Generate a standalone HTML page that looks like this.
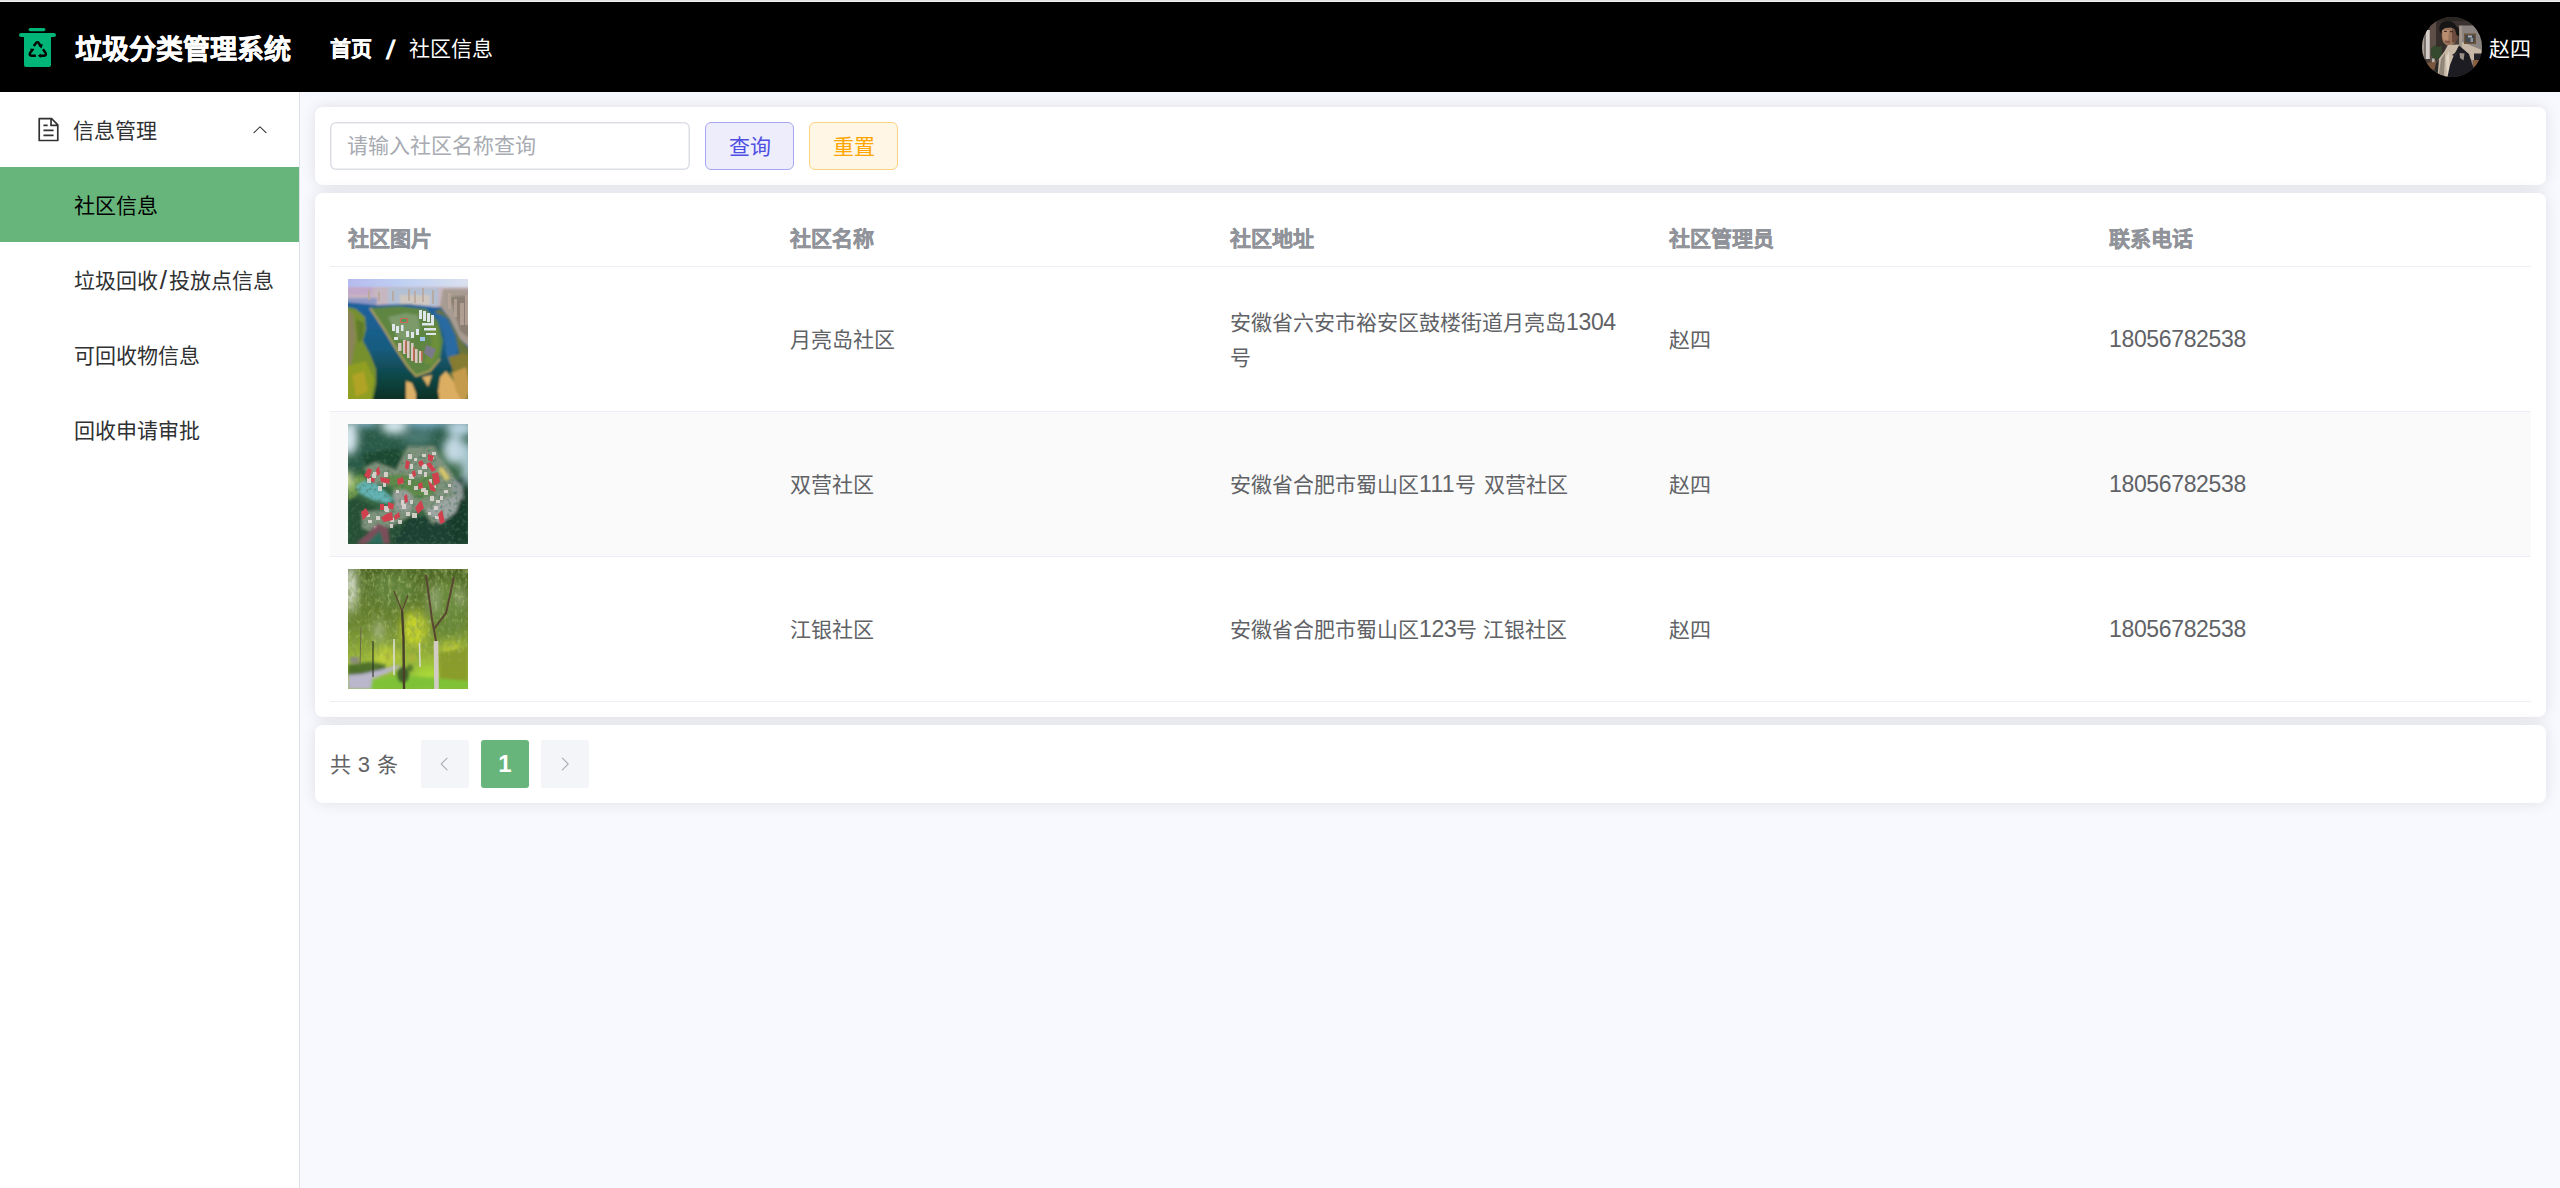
<!DOCTYPE html>
<html lang="zh-CN">
<head>
<meta charset="utf-8">
<title>垃圾分类管理系统</title>
<style>
*{box-sizing:border-box;margin:0;padding:0}
html,body{width:2560px;height:1188px;overflow:hidden;background:#f8f8ff;font-family:"Liberation Sans",sans-serif;}
body{position:relative}
.abs{position:absolute}
#strip{left:0;top:0;width:2560px;height:2px;background:linear-gradient(#e1e3e0 0,#e1e3e0 50%,#eff1ee 50%,#eff1ee 100%)}
#header{left:0;top:2px;width:2560px;height:90px;background:#000;color:#fff}
#title{left:75px;top:2px;height:90px;line-height:92px;font-size:27px;font-weight:bold;white-space:nowrap;-webkit-text-stroke:0.5px #fff}
#crumb{left:330px;top:1px;height:90px;line-height:92px;font-size:21px;white-space:nowrap}
#crumb b{font-weight:bold;-webkit-text-stroke:0.4px #fff}
#crumb .sep{display:inline-block;width:37px;text-align:center;font-weight:bold;font-size:27px;transform:skewX(-10deg);line-height:20px;position:relative;top:2.5px}
#uname{left:2489px;top:0.5px;height:90px;line-height:92px;font-size:21px;white-space:nowrap}
#avatar{left:2422px;top:15px;width:60px;height:60px}
#side{left:0;top:92px;width:300px;height:1096px;background:#fff;border-right:1px solid #dcdfe6}
.mi{left:0;width:299px;height:75px;line-height:75px;font-size:21px;color:#303133;white-space:nowrap}
.mi span{position:absolute;left:74px;top:1px}
.mi.act{background:#67b57b;color:#000}
.card{background:#fff;border-radius:7.5px;box-shadow:0 0 15px rgba(0,0,0,.1)}
#c1{left:315px;top:107px;width:2231px;height:78px}
#c2{left:315px;top:193px;width:2231px;height:524px}
#c3{left:315px;top:725px;width:2231px;height:78px}
#inp{left:15px;top:15px;width:360px;height:48px;box-shadow:inset 0 0 0 1.5px #dcdfe6;border-radius:6px;line-height:48px;padding-left:16.5px;font-size:21px;color:#a8abb2}
.btn{top:15px;width:89px;height:48px;border-radius:6px;line-height:48.5px;text-align:center;font-size:21px;border:1.5px solid}
#b1{left:390px;background:#ededfc;border-color:#a7a7f1;color:#4f4fe3}
#b2{left:494px;background:#fff6e6;border-color:#ffd280;color:#ffa500}
.th{top:15.5px;height:58px;line-height:60px;font-size:21px;font-weight:bold;color:#909399;white-space:nowrap;-webkit-text-stroke:0.45px #909399}
.hl{left:15px;width:2201px;height:1px;background:#ebeef5}
.row{left:15px;width:2201px;height:144px}
.row.s{background:#fafafa}
.td{font-size:21px;color:#606266;line-height:34.5px;white-space:nowrap}
.n{font-size:23px;letter-spacing:-0.35px;line-height:20px;position:relative;top:0px}
.img{left:18px;top:12px;width:120px;height:120px;overflow:hidden}
.pg{top:15px;width:48px;height:48px;border-radius:3px;background:#f4f5f9}
</style>
</head>
<body>
<div id="strip" class="abs"></div>
<div id="header" class="abs">
  <svg class="abs" style="left:12px;top:20px" width="52" height="52" viewBox="12 22 52 52">
    <rect x="28.6" y="27.9" width="16.8" height="3.3" rx="1.65" fill="#00b578"/>
    <rect x="19" y="32.9" width="37" height="4.2" rx="2.1" fill="#00b578"/>
    <path d="M24 35h27v30a2.1 2.1 0 0 1-2.1 2.1h-22.8a2.1 2.1 0 0 1-2.1-2.1z" fill="#00b578"/>
    <g fill="none" stroke="#000" stroke-width="2.4" stroke-linejoin="round">
      <path d="M33.7 45.9L36.3 42.7Q37.5 41.5 38.6 42.9L40.6 46"/>
      <path d="M32.6 49.6L30 53Q28.9 55.6 31.6 55.7L35.9 55.7"/>
      <path d="M43 49.2L45.6 53Q46.8 55.6 44 55.7L40.4 55.7"/>
    </g>
    <path d="M38.4 45.5L42.8 44L41.5 48.4z" fill="#000"/>
    <path d="M29.6 48.8L34.3 48.8L32.9 51.6z" fill="#000"/>
    <path d="M37.9 55.7L40.8 53.4L40.8 58z" fill="#000"/>
  </svg>
  <div id="title" class="abs">垃圾分类管理系统</div>
  <div id="crumb" class="abs"><b>首页</b><span class="sep">/</span>社区信息</div>
  <div id="avatar" class="abs"><!--AV--><svg width="60" height="60" viewBox="0 0 60 60" style="display:block">
<defs><filter id="bla" x="-10%" y="-10%" width="120%" height="120%"><feGaussianBlur stdDeviation="0.55"/></filter>
<clipPath id="cpa"><circle cx="30" cy="30" r="30"/></clipPath></defs>
<g clip-path="url(#cpa)">
<rect width="60" height="60" fill="#463d38"/>
<g filter="url(#bla)">
<rect x="-2" y="-2" width="64" height="9" fill="#2b2524"/>
<rect x="8" y="4" width="6" height="50" fill="#5d5047"/>
<rect x="14" y="4" width="10" height="44" fill="#352d29"/>
<rect x="3.6" y="13" width="4.2" height="29" fill="#d3cbc5"/>
<rect x="-2" y="18" width="4.5" height="24" fill="#aaa098"/>
<rect x="37" y="8" width="26" height="40" fill="#8a8380"/>
<path d="M38 24 L60 33 L60 47 L38 38z" fill="#c6b7a7"/>
<rect x="37.5" y="8" width="2.6" height="30" fill="#a5988b"/>
<rect x="42" y="16.5" width="12" height="10.5" fill="#6b5239"/>
<rect x="43.5" y="18" width="9" height="7.5" fill="#45474f"/>
<rect x="46" y="18.5" width="4" height="2" fill="#a9b0b6"/>
<rect x="48.5" y="21" width="2.5" height="4" fill="#8e949c"/>
<rect x="28" y="4" width="32" height="4.5" fill="#3a3331"/>
<path d="M9 31 L13 28 L16 30 L19.5 29 L20 40 L13 43 L9 39z" fill="#36492f"/>
<rect x="10" y="41.5" width="2.6" height="5" fill="#b8b1a7"/>
<path d="M5 45.5 L15 45 L15 51 L8 53z" fill="#7a563e"/>
<path d="M52 36.5 L60 36.5 L60 43 L52 43z" fill="#26242b"/>
<path d="M51 43 L58 43 L56 50 L51 50z" fill="#8a5e40"/>
<path d="M20 12 Q19 20 21 25 Q24 29.5 29 28.5 L33 26 L35.5 20 L35 12 Q27 8 20 12z" fill="#9a735b"/>
<path d="M20.5 13 Q20 20 22 24 L26 26 L27 13z" fill="#b88d70"/>
<path d="M30 12 L35.5 13 L36 21 L33 26 L30 25z" fill="#6a4b3c"/>
<path d="M22.5 23.5 L28 24 L27.5 26 L23.5 25.6z" fill="#7a4f40"/>
<path d="M17.5 14 Q16.5 6.5 22 4.5 Q30 2.5 33.5 8 L37 12 L37 19.5 L34.5 18 L33 12.5 L29 10.5 L23 11 L19.8 13.5 L19.5 17z" fill="#191716"/>
<path d="M22 14.5 L25 14.3 M28 14.6 L31 14.8" stroke="#2a1d18" stroke-width="0.9"/>
<path d="M26 28 L36.5 27.5 L38 30 L31 42 L27 60 L13 60 L14.5 45 L22 35z" fill="#c9baa8"/>
<path d="M19 42 L23 36 L22 60 L16.5 60z" fill="#91867a"/>
<path d="M24 40 L27 34 L28 60 L25 60z" fill="#e0d4c4"/>
<path d="M37 28.5 L47 37 L51 50 L50.5 62 L25 62 L28 48 L32 38z" fill="#1c1c21"/>
<path d="M37.5 36 L42.5 36.5 L41.5 43.5 L38 41z" fill="#9a9088"/>
<path d="M30 38 L36.5 33.5 L34 40z" fill="#26252a"/>
<path d="M14 46 L17 42 L15.5 60 L11 60z" fill="#2c2928"/>
</g>
</g>
</svg>
<!--/AV--></div>
  <div id="uname" class="abs">赵四</div>
</div>
<div id="side" class="abs">
  <div class="mi abs" style="top:0"><svg class="abs" style="left:34.5px;top:24px" width="27" height="27" viewBox="0 0 1024 1024"><path fill="#303133" d="M832 384H576V128H192v768h640V384zm-26.496-64L640 154.496V320h165.504zM160 64h480l256 256v608a32 32 0 0 1-32 32H160a32 32 0 0 1-32-32V96a32 32 0 0 1 32-32zm160 448h384v64H320v-64zm0-192h160v64H320v-64zm0 384h384v64H320v-64z"/></svg><span style="left:73px">信息管理</span><svg class="abs" style="left:250.5px;top:28.5px;transform:rotate(180deg)" width="18" height="18" viewBox="0 0 1024 1024"><path fill="#303133" d="M831.872 340.864 512 652.672 192.128 340.864a30.592 30.592 0 0 0-42.752 0 29.12 29.12 0 0 0 0 41.6L489.664 714.24a32 32 0 0 0 44.672 0l340.288-331.712a29.12 29.12 0 0 0 0-41.728 30.592 30.592 0 0 0-42.752 0z"/></svg></div>
  <div class="mi abs act" style="top:75px"><span>社区信息</span></div>
  <div class="mi abs" style="top:150px"><span>垃圾回收<i style="font-style:normal;font-size:26px;line-height:20px;margin:0 1.8px;position:relative;top:1px">/</i>投放点信息</span></div>
  <div class="mi abs" style="top:225px"><span>可回收物信息</span></div>
  <div class="mi abs" style="top:300px"><span>回收申请审批</span></div>
</div>
<div id="c1" class="abs card">
  <div id="inp" class="abs">请输入社区名称查询</div>
  <div id="b1" class="abs btn">查询</div>
  <div id="b2" class="abs btn">重置</div>
</div>
<div id="c2" class="abs card">
  <div class="th abs" style="left:33px">社区图片</div>
  <div class="th abs" style="left:475px">社区名称</div>
  <div class="th abs" style="left:915px">社区地址</div>
  <div class="th abs" style="left:1354px">社区管理员</div>
  <div class="th abs" style="left:1794px">联系电话</div>
  <div class="hl abs" style="top:73px"></div>
  <div class="row abs" style="top:74px">
    <div class="img abs" style="background:#4a7a6a"><!--I1--><svg width="120" height="120" viewBox="0 0 120 120" style="display:block">
<defs>
<filter id="bl1" x="-10%" y="-10%" width="120%" height="120%"><feGaussianBlur stdDeviation="1.1"/></filter>
<filter id="bl1s" x="-10%" y="-10%" width="120%" height="120%"><feGaussianBlur stdDeviation="0.5"/></filter>
<linearGradient id="sky1" x1="0" y1="0" x2="1" y2="0"><stop offset="0" stop-color="#b4b9ee"/><stop offset=".45" stop-color="#bfd0f3"/><stop offset="1" stop-color="#dde2ee"/></linearGradient>
<linearGradient id="riv1" x1="0" y1="0" x2="0" y2="1"><stop offset="0" stop-color="#1e62a0"/><stop offset=".45" stop-color="#175c80"/><stop offset=".75" stop-color="#0f4644"/><stop offset="1" stop-color="#0b2c1e"/></linearGradient>
</defs>
<rect width="120" height="120" fill="#16566f"/>
<g filter="url(#bl1)">
<rect x="-5" y="-5" width="130" height="14" fill="url(#sky1)"/>
<rect x="-5" y="8" width="130" height="20" fill="#c6b6c0"/>
<rect x="-5" y="8" width="30" height="8" fill="#c2a9c9"/>
<rect x="40" y="9" width="50" height="18" fill="#b3c0d4"/>
<rect x="52" y="16" width="30" height="10" fill="#cfc7c0"/>
<rect x="-5" y="19" width="34" height="6" fill="#8f98c4"/>
<path d="M-5 23 L30 26 L60 25 L95 29 L125 40 L125 125 L-5 125z" fill="url(#riv1)"/>
<path d="M95 10 L125 10 L125 72 L112 60 L102 40 L92 27z" fill="#a89c92"/>
<path d="M102 18 L125 16 L125 62 L112 52z" fill="#8a7f72"/>
<path d="M-5 27 L8 30 L17 38 L18 50 L15 62 L22 75 L28 90 L28 105 L24 125 L-5 125z" fill="#76902e"/>
<path d="M-5 30 L5 34 L8 58 L3 88 L-5 100z" fill="#8a8458"/>
<path d="M8 40 L16 44 L15 60 L10 64z" fill="#5e7a2c"/>
<path d="M-5 88 L18 82 L26 100 L22 125 L-5 125z" fill="#909f20"/>
<path d="M4 96 L16 92 L20 112 L8 118z" fill="#b0a326"/>
<path d="M22 29 L50 27 L78 30 L90 42 L95 62 L92 80 L82 92 L68 97 L60 88 L48 70 L36 50 L28 38z" fill="#5e8543"/>
<path d="M40 38 L58 34 L70 36 L72 50 L60 62 L50 60z" fill="#7b9a6a"/>
<path d="M80 46 L90 48 L92 70 L84 86 L76 84 L84 64z" fill="#6d8f3a"/>
<path d="M22 29 L28 38 L36 50 L48 70 L60 88 L68 97 L82 92 L92 80" stroke="#b9a75c" stroke-width="1.6" fill="none"/>
<path d="M86 33 L100 40 L108 58 L112 78 L104 92 L96 100 L100 125 L125 125 L125 75 L112 60 L100 38 L92 30z" fill="#67733a"/>
<path d="M84 32 L98 38 L107 55 L110 72 L102 86 L98 75 L96 55 L90 40z" fill="#2a6ba2"/>
<path d="M58 102 L64 104 L68 114 L68 125 L58 125z" fill="#dcb067"/>
<path d="M74 98 L84 96 L80 108 L78 104z" fill="#dcb067"/>
<path d="M92 98 L98 92 L104 100 L112 112 L116 125 L92 125 L90 112z" fill="#dcae62"/>
<path d="M100 78 L116 74 L125 80 L125 125 L114 125 L108 100z" fill="#857c30"/>
<path d="M104 94 L118 88 L122 110 L116 125 L108 112z" fill="#c49a4c"/>
</g>
<g filter="url(#bl1s)">
<g fill="#dfe6ec">
<rect x="71" y="31" width="3" height="9"/><rect x="75" y="32" width="3" height="10"/><rect x="79" y="34" width="3" height="9"/><rect x="83" y="36" width="3" height="9"/>
<rect x="74" y="44" width="12" height="2.5"/><rect x="76" y="49" width="12" height="2.5"/><rect x="78" y="54" width="10" height="2"/>
<rect x="44" y="45" width="3" height="7"/><rect x="48" y="47" width="3" height="7"/><rect x="53" y="46" width="2.5" height="6"/>
<rect x="58" y="52" width="3" height="6"/><rect x="63" y="53" width="3" height="6"/><rect x="68" y="50" width="3" height="6"/>
<rect x="46" y="58" width="4" height="3"/><rect x="72" y="58" width="5" height="4" fill="#9cc4e6"/>
</g>
<g fill="#d9c6c2">
<rect x="55" y="61" width="2.6" height="14"/><rect x="59" y="62" width="2.6" height="17"/><rect x="63" y="64" width="2.6" height="18"/><rect x="67" y="70" width="2.6" height="14"/><rect x="71" y="72" width="2.6" height="12"/>
<rect x="50" y="64" width="3.5" height="8"/>
</g>
<g fill="#c86a58"><rect x="52" y="39" width="8" height="5"/><rect x="57" y="62" width="1.6" height="12"/><rect x="65" y="68" width="1.6" height="14"/><rect x="73" y="72" width="1.6" height="10"/></g>
<rect x="53.5" y="40" width="5" height="3" fill="#4f9a58"/>
<path d="M78 66 L88 70 L84 80 L76 74z" fill="#7a7a8a"/>
<g fill="#b9a79a" opacity=".8"><rect x="100" y="14" width="3" height="16"/><rect x="106" y="20" width="3" height="18"/><rect x="112" y="24" width="4" height="22"/><rect x="117" y="16" width="3" height="30"/>
<rect x="60" y="10" width="2" height="12"/><rect x="66" y="12" width="2" height="12"/><rect x="74" y="9" width="2" height="14"/><rect x="84" y="11" width="2" height="14"/><rect x="20" y="11" width="2" height="10"/><rect x="30" y="13" width="2" height="9"/><rect x="44" y="12" width="2" height="10"/></g>
</g>
</svg>
<!--/I1--></div>
    <div class="td abs" style="left:460px;top:55.7px">月亮岛社区</div>
    <div class="td abs" style="left:900px;top:39px">安徽省六安市裕安区鼓楼街道月亮岛<span class="n">1304</span><br>号</div>
    <div class="td abs" style="left:1339px;top:55.7px">赵四</div>
    <div class="td abs" style="left:1779px;top:55.7px"><span class="n">18056782538</span></div>
  </div>
  <div class="hl abs" style="top:218px"></div>
  <div class="row abs s" style="top:219px">
    <div class="img abs" style="background:#3a6a5a"><!--I2--><svg width="120" height="120" viewBox="0 0 120 120" style="display:block">
<defs>
<filter id="bl2" x="-10%" y="-10%" width="120%" height="120%"><feGaussianBlur stdDeviation="1.5"/></filter>
<filter id="bl2c" x="-30%" y="-30%" width="160%" height="160%"><feGaussianBlur stdDeviation="4"/></filter>
<filter id="bl2s" x="-10%" y="-10%" width="120%" height="120%"><feGaussianBlur stdDeviation="0.7"/></filter>
<filter id="tx2" x="0" y="0" width="100%" height="100%"><feTurbulence type="fractalNoise" baseFrequency="0.28" numOctaves="2" seed="5"/><feColorMatrix type="matrix" values="0 0 0 0 0.06  0 0 0 0 0.16  0 0 0 0 0.1  0 0 0 3 -1.5"/></filter>
</defs>
<rect width="120" height="120" fill="#33623f"/>
<g filter="url(#bl2)">
<path d="M0 0H120V30L70 22L30 35L0 50z" fill="#2a5a48"/>
<path d="M14 30 L50 24 L58 40 L40 50 L20 48z" fill="#1f4a30"/>
<path d="M0 70 L30 85 L60 92 L100 95 L120 80 L120 120 L0 120z" fill="#274f36"/>
<path d="M60 95 L120 85 L120 120 L45 120z" fill="#1d4030"/>
<path d="M100 60 L120 50 L120 120 L105 120z" fill="#183a2c"/>
<path d="M0 60 L12 50 L20 56 L8 72 L0 76z" fill="#6f9a4a"/>
<path d="M16 44 L28 38 L48 46 L56 30 L60 22 L86 22 L94 36 L104 48 L112 66 L98 92 L84 100 L74 84 L62 92 L44 102 L28 110 L14 104 L14 88 L36 86 L48 78 L44 62 L26 60z" fill="#7f927c"/>
<path d="M44 70 L52 64 L64 70 L62 86 L50 88z" fill="#9aa09c"/>
<path d="M78 86 L100 74 L114 70 L108 88 L92 100z" fill="#9ea6a4"/>
<path d="M104 52 L114 62 L116 76 L104 68z" fill="#8d9896"/>
<path d="M36 52 L56 50 L70 56 L78 50 L92 52 L86 70 L70 76 L58 66 L44 66z" fill="#5f8a4a"/>
<path d="M8 62 L16 57 L28 60 L40 70 L46 76 L40 80 L24 76 L12 70z" fill="#63b3b4"/>
</g>
<rect width="120" height="120" filter="url(#tx2)" opacity=".6"/>
<g filter="url(#bl2s)" fill="#ddd6d2" opacity=".9"><rect x="19" y="54" width="4" height="5"/><rect x="25" y="48" width="5" height="3"/><rect x="35" y="58" width="3" height="5"/><rect x="20" y="55" width="3" height="4"/><rect x="52" y="57" width="3" height="3"/><rect x="62" y="40" width="3" height="5"/><rect x="61" y="50" width="5" height="5"/><rect x="74" y="40" width="5" height="5"/><rect x="83" y="32" width="3" height="3"/><rect x="82" y="42" width="4" height="4"/><rect x="81" y="55" width="3" height="5"/><rect x="83" y="61" width="5" height="3"/><rect x="64" y="89" width="5" height="5"/><rect x="53" y="76" width="3" height="5"/><rect x="17" y="90" width="5" height="3"/><rect x="36" y="82" width="4" height="5"/><rect x="42" y="94" width="4" height="4"/><rect x="50" y="96" width="4" height="4"/><rect x="87" y="92" width="5" height="3"/><rect x="37" y="83" width="4" height="5"/><rect x="73" y="64" width="5" height="4"/><rect x="60" y="30" width="4" height="5"/><rect x="66" y="34" width="3" height="3"/><rect x="74" y="30" width="4" height="3"/><rect x="84" y="28" width="4" height="3"/><rect x="70" y="46" width="4" height="4"/><rect x="76" y="48" width="3" height="5"/><rect x="60" y="56" width="3" height="5"/><rect x="66" y="62" width="4" height="4"/><rect x="76" y="66" width="4" height="5"/><rect x="82" y="72" width="4" height="5"/><rect x="88" y="76" width="4" height="3"/><rect x="62" y="76" width="3" height="4"/><rect x="54" y="80" width="4" height="5"/><rect x="48" y="66" width="3" height="3"/><rect x="36" y="48" width="4" height="5"/><rect x="24" y="50" width="4" height="4"/><rect x="30" y="62" width="4" height="5"/><rect x="20" y="96" width="4" height="3"/><rect x="28" y="92" width="4" height="4"/><rect x="26" y="102" width="3" height="5"/><rect x="42" y="100" width="3" height="4"/><rect x="100" y="60" width="3" height="3"/><rect x="96" y="66" width="4" height="3"/><rect x="92" y="72" width="3" height="4"/><rect x="86" y="82" width="4" height="4"/><rect x="80" y="88" width="3" height="3"/><rect x="58" y="88" width="4" height="4"/></g>
<g filter="url(#bl2s)" fill="#d0404e">
<path d="M16 52 L20 44 L24 46 L21 55z"/><path d="M28 46 L31 42 L32 50 L29 52z"/><path d="M32 53 L42 55 L41 60 L33 58z"/>
<path d="M23 53 L27 55 L26 59 L23 57z"/>
<path d="M49 55 L55 53 L56 59 L50 61z"/><path d="M58 36 L62 38 L60 46 L57 44z"/><path d="M64 48 L67 46 L68 52 L65 53z"/>
<path d="M70 38 L74 36 L76 40 L72 43z"/><path d="M80 30 L86 32 L84 38 L80 36z"/><path d="M78 40 L82 38 L88 46 L84 48z"/>
<path d="M84 50 L90 48 L92 58 L86 62z"/><path d="M80 56 L86 62 L88 68 L82 66z"/><path d="M67 84 L73 76 L76 84 L70 90z"/>
<path d="M56 72 L59 70 L60 78 L57 79z"/><path d="M13 88 L18 84 L21 90 L15 96z"/><path d="M32 80 L36 80 L36 86 L32 86z"/>
<path d="M38 90 L44 88 L45 96 L36 98 L33 94z"/><path d="M46 92 L51 88 L52 93 L47 96z"/><path d="M90 90 L94 86 L97 98 L92 100z"/>
<path d="M40 78 L46 80 L45 86 L40 84z"/><path d="M70 60 L74 58 L75 64 L71 65z"/>
</g>
<g filter="url(#bl2)">
<path d="M8 120 L30 100 L40 104 L42 120z" fill="#7d4e5a"/>
<path d="M18 120 L32 106 L36 120z" fill="#2f6b5c"/>
<path d="M90 46 L94 42 L102 54 L98 57z" fill="#d9c76a"/>
</g>
<g filter="url(#bl2c)" fill="#d6e7ef">
<ellipse cx="1" cy="14" rx="9" ry="17"/>
<ellipse cx="46" cy="2" rx="13" ry="8"/>
<ellipse cx="106" cy="26" rx="11" ry="14" fill="#c3d9e3"/>
<ellipse cx="120" cy="40" rx="7" ry="22" fill="#a9c6d0"/>
<ellipse cx="112" cy="4" rx="14" ry="8" fill="#bcd6e4"/>
<ellipse cx="78" cy="-3" rx="22" ry="7" fill="#7fb0cc"/>
<ellipse cx="18" cy="-3" rx="12" ry="6" fill="#8fbcd6"/>
<ellipse cx="70" cy="14" rx="16" ry="6" fill="#4f7f78"/>
</g>
<ellipse cx="-2" cy="56" rx="7" ry="9" fill="#e8f0b0" filter="url(#bl2c)"/>
</svg>
<!--/I2--></div>
    <div class="td abs" style="left:460px;top:55.7px">双营社区</div>
    <div class="td abs" style="left:900px;top:55.7px;word-spacing:2.2px">安徽省合肥市蜀山区<span class="n" style="letter-spacing:.3px">111</span>号 双营社区</div>
    <div class="td abs" style="left:1339px;top:55.7px">赵四</div>
    <div class="td abs" style="left:1779px;top:55.7px"><span class="n">18056782538</span></div>
  </div>
  <div class="hl abs" style="top:363px"></div>
  <div class="row abs" style="top:364px">
    <div class="img abs" style="background:#7a9a3a"><!--I3--><svg width="120" height="120" viewBox="0 0 120 120" style="display:block">
<defs>
<filter id="bl3" x="-10%" y="-10%" width="120%" height="120%"><feGaussianBlur stdDeviation="1.8"/></filter>
<filter id="bl3c" x="-30%" y="-30%" width="160%" height="160%"><feGaussianBlur stdDeviation="5"/></filter>
<filter id="bl3s" x="-10%" y="-10%" width="120%" height="120%"><feGaussianBlur stdDeviation="0.6"/></filter>
<linearGradient id="g3" x1="0" y1="0" x2="0" y2="1"><stop offset="0" stop-color="#4c6627"/><stop offset=".45" stop-color="#69842f"/><stop offset=".75" stop-color="#9bb83a"/><stop offset="1" stop-color="#8cc03a"/></linearGradient>
<filter id="tx3" x="0" y="0" width="100%" height="100%"><feTurbulence type="fractalNoise" baseFrequency="0.22 0.16" numOctaves="2" seed="4"/><feColorMatrix type="matrix" values="0 0 0 0 0.2  0 0 0 0 0.3  0 0 0 0 0.08  0 0 0 2.6 -1.05"/></filter>
<filter id="tx3b" x="0" y="0" width="100%" height="100%"><feTurbulence type="fractalNoise" baseFrequency="0.3 0.2" numOctaves="2" seed="9"/><feColorMatrix type="matrix" values="0 0 0 0 0.72  0 0 0 0 0.82  0 0 0 0 0.3  0 0 0 3 -1.6"/></filter>
<linearGradient id="fd3" x1="0" y1="0" x2="0" y2="1"><stop offset="0" stop-color="#fff"/><stop offset=".6" stop-color="#fff" stop-opacity=".7"/><stop offset=".85" stop-color="#fff" stop-opacity="0"/></linearGradient>
<mask id="mk3"><rect width="120" height="120" fill="url(#fd3)"/></mask>
</defs>
<rect width="120" height="120" fill="url(#g3)"/>
<g filter="url(#bl3c)">
<ellipse cx="3" cy="20" rx="5" ry="24" fill="#fbfcfa"/><ellipse cx="2" cy="18" rx="3" ry="20" fill="#ffffff"/>
<ellipse cx="31" cy="62" rx="4" ry="11" fill="#b9c4a0"/>
<ellipse cx="66" cy="60" rx="13" ry="18" fill="#c4d22c"/>
<ellipse cx="38" cy="88" rx="12" ry="10" fill="#c2d23a"/>
<ellipse cx="104" cy="82" rx="12" ry="8" fill="#c4cf35"/>
<ellipse cx="82" cy="106" rx="16" ry="10" fill="#a9d638"/>
<ellipse cx="45" cy="20" rx="22" ry="16" fill="#62823a"/>
<ellipse cx="98" cy="40" rx="20" ry="28" fill="#688838"/>
<ellipse cx="113" cy="28" rx="3" ry="9" fill="#aab890"/>
<ellipse cx="86" cy="30" rx="3" ry="14" fill="#a8b890"/>
</g>
<g filter="url(#bl3)">
<path d="M90 84 L120 78 L120 120 L92 120z" fill="#8a9c2c"/>
<path d="M0 96 L22 93 L38 96 L36 103 L12 106 L0 106z" fill="#4f6f2c"/>
<path d="M0 106 L14 105 L36 100 L50 96 L52 98 L40 104 L24 110 L23 120 L0 120z" fill="#bab6cc"/>
<path d="M24 112 L50 106 L120 112 L120 120 L23 120z" fill="#7fc238"/>
<ellipse cx="55" cy="106" rx="6" ry="8" fill="#3f5f2a"/>
<ellipse cx="62" cy="99" rx="3" ry="3.5" fill="#557a2c"/>
<rect x="2" y="88" width="9" height="6" fill="#8a8a86"/>
<ellipse cx="64" cy="88" rx="3" ry="5" fill="#a9b43a"/>
<ellipse cx="40" cy="88" rx="2.5" ry="4" fill="#a9b43a"/>
</g>
<g mask="url(#mk3)"><rect width="120" height="120" filter="url(#tx3)" opacity=".75"/><rect width="120" height="120" filter="url(#tx3b)" opacity=".45"/></g>
<g filter="url(#bl3s)" fill="none">
<path d="M56 120 L55.5 70 L54 40" stroke="#4a3f2a" stroke-width="2.4"/>
<path d="M54 42 L46 22 M54 42 L60 26" stroke="#5a4a30" stroke-width="1.3"/>
<path d="M88.5 120 L88 72" stroke="#d2ccc6" stroke-width="4.6"/>
<path d="M88 72 L84 50 L78 6 M86 60 L98 44 L106 8" stroke="#5a4632" stroke-width="2"/>
<path d="M46 106 L46 70" stroke="#dcdcd8" stroke-width="1.6"/>
<path d="M72 98 L71.5 74" stroke="#d8d8d0" stroke-width="1.6"/>
<path d="M25 108 L25 72" stroke="#26301f" stroke-width="1.1"/>
<path d="M12 96 L13 58" stroke="#6a6a4a" stroke-width="1"/>
</g>
</svg>
<!--/I3--></div>
    <div class="td abs" style="left:460px;top:55.7px">江银社区</div>
    <div class="td abs" style="left:900px;top:55.7px">安徽省合肥市蜀山区<span class="n">123</span>号 江银社区</div>
    <div class="td abs" style="left:1339px;top:55.7px">赵四</div>
    <div class="td abs" style="left:1779px;top:55.7px"><span class="n">18056782538</span></div>
  </div>
  <div class="hl abs" style="top:508px"></div>
</div>
<div id="c3" class="abs card">
  <div class="td abs" style="left:15px;top:15.5px;line-height:48px;word-spacing:1px">共 <span class="n" style="font-size:22px">3</span> 条</div>
  <div class="pg abs" style="left:106px"><svg class="abs" style="left:15px;top:15px" width="18" height="18" viewBox="0 0 1024 1024"><path fill="#a8abb2" d="M609.408 149.376 277.76 489.6a32 32 0 0 0 0 44.672l331.648 340.352a29.12 29.12 0 0 0 41.728 0 30.592 30.592 0 0 0 0-42.752L339.264 511.936l311.872-319.872a30.592 30.592 0 0 0 0-42.688 29.12 29.12 0 0 0-41.728 0z"/></svg></div>
  <div class="pg abs" style="left:166px;background:#67b57b;color:#fff;font-weight:bold;font-size:24px;text-align:center;line-height:47px">1</div>
  <div class="pg abs" style="left:226px"><svg class="abs" style="left:15px;top:15px" width="18" height="18" viewBox="0 0 1024 1024"><path fill="#a8abb2" d="M340.864 149.312a30.592 30.592 0 0 0 0 42.752L652.736 512 340.864 831.872a30.592 30.592 0 0 0 0 42.752 29.12 29.12 0 0 0 41.728 0L714.24 534.336a32 32 0 0 0 0-44.672L382.592 149.376a29.12 29.12 0 0 0-41.728 0z"/></svg></div>
</div>
</body>
</html>
